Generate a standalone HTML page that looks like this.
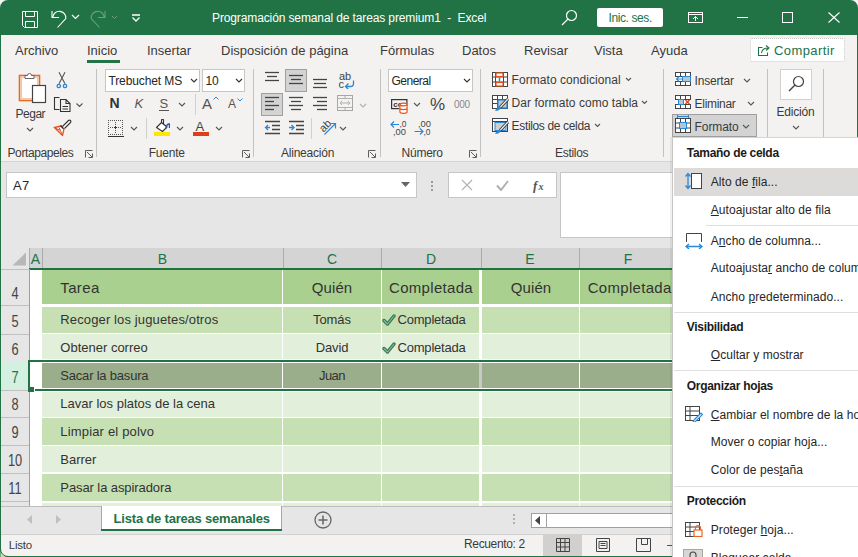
<!DOCTYPE html>
<html><head><meta charset="utf-8"><style>
html,body{margin:0;padding:0;}
body{width:858px;height:557px;position:relative;overflow:hidden;background:#ffffff;font-family:"Liberation Sans", sans-serif;}
.t{position:absolute;white-space:pre;font-family:"Liberation Sans", sans-serif;}
.r{position:absolute;}
</style></head><body>
<div class="r" style="left:0px;top:0px;width:858px;height:35px;background:#217346;"></div>
<div class="t" style="left:212px;top:11.54px;font-size:12px;line-height:12px;color:#ffffff;letter-spacing:-0.12px;">Programación semanal de tareas premium1&nbsp; -&nbsp; Excel</div>
<svg class="r" style="left:22px;top:11px" width="16" height="17" viewBox="0 0 16 17"><path d="M0.5 0.5h15v16h-13l-2-2z M3.5 0.5v5h9v-5 M3.5 16.5v-6h9v6" fill="none" stroke="#fff" stroke-width="1"/></svg>
<svg class="r" style="left:50px;top:10px" width="18" height="18" viewBox="0 0 18 18"><path d="M2 1V7.5H9 M2.8 7.2 A6.4 6.4 0 0 1 15.8 8.5 L7.5 17.5" fill="none" stroke="#fff" stroke-width="1.1"/></svg>
<svg class="r" style="left:71px;top:14px" width="9" height="6" viewBox="0 0 9 6"><path d="M1 1l3.5 3.5L8 1" fill="none" stroke="#fff" stroke-width="1.2"/></svg>
<svg class="r" style="left:89px;top:10px" width="18" height="18" viewBox="0 0 18 18"><path d="M16 1V7.5H9 M15.2 7.2 A6.4 6.4 0 0 0 2.2 8.5 L10.5 17.5" fill="none" stroke="#6d9f83" stroke-width="1.1"/></svg>
<svg class="r" style="left:111px;top:15px" width="7" height="5" viewBox="0 0 7 5"><path d="M1 1l2.5 2.5L6 1" fill="none" stroke="#6d9f83" stroke-width="1"/></svg>
<svg class="r" style="left:131px;top:14px" width="10" height="8" viewBox="0 0 10 8"><path d="M1 1h8 M1.5 3.5l3.5 3.5 3.5-3.5" fill="none" stroke="#fff" stroke-width="1.3"/></svg>
<svg class="r" style="left:561px;top:9px" width="17" height="17" viewBox="0 0 17 17"><circle cx="10.5" cy="6.5" r="5" fill="none" stroke="#fff" stroke-width="1.2"/><path d="M7 10L1 16" stroke="#fff" stroke-width="1.3"/></svg>
<div class="r" style="left:597px;top:8px;width:66px;height:19px;background:#ffffff;border-radius:2px;"></div>
<div class="t" style="left:608.5px;top:11.64px;font-size:12px;line-height:12px;color:#217346;letter-spacing:-0.4px;">Inic. ses.</div>
<svg class="r" style="left:688px;top:12px" width="15" height="11" viewBox="0 0 15 11"><rect x="0.5" y="0.5" width="14" height="10" fill="none" stroke="#fff"/><path d="M0.5 2.5h14 M7.5 9V4.5 M5 7l2.5-2.5L10 7" fill="none" stroke="#fff"/></svg>
<div class="r" style="left:737px;top:17px;width:11px;height:1px;background:#ffffff;"></div>
<svg class="r" style="left:782px;top:12px" width="12" height="11" viewBox="0 0 12 11"><rect x="0.5" y="0.5" width="10" height="10" fill="none" stroke="#fff"/></svg>
<svg class="r" style="left:828px;top:12px" width="12" height="11" viewBox="0 0 12 11"><path d="M0.5 0.5l11 10 M11.5 0.5l-11 10" stroke="#fff" stroke-width="1.1"/></svg>
<div class="r" style="left:0px;top:35px;width:858px;height:126px;background:#f3f2f1;"></div>
<div class="t" style="left:15px;top:44.30px;font-size:13px;line-height:13px;color:#3b3a39;">Archivo</div>
<div class="t" style="left:87px;top:44.30px;font-size:13px;line-height:13px;color:#3b3a39;">Inicio</div>
<div class="t" style="left:147px;top:44.30px;font-size:13px;line-height:13px;color:#3b3a39;">Insertar</div>
<div class="t" style="left:221px;top:44.30px;font-size:13px;line-height:13px;color:#3b3a39;">Disposición de página</div>
<div class="t" style="left:380px;top:44.30px;font-size:13px;line-height:13px;color:#3b3a39;">Fórmulas</div>
<div class="t" style="left:462px;top:44.30px;font-size:13px;line-height:13px;color:#3b3a39;">Datos</div>
<div class="t" style="left:524px;top:44.30px;font-size:13px;line-height:13px;color:#3b3a39;">Revisar</div>
<div class="t" style="left:594px;top:44.30px;font-size:13px;line-height:13px;color:#3b3a39;">Vista</div>
<div class="t" style="left:651px;top:44.30px;font-size:13px;line-height:13px;color:#3b3a39;">Ayuda</div>
<div class="r" style="left:87px;top:60px;width:33px;height:3px;background:#217346;"></div>
<div class="r" style="left:750px;top:38px;width:95px;height:24px;background:#ffffff;border:1px dotted #c8c6c4;box-sizing:border-box;border-radius:2px;"></div>
<svg class="r" style="left:757px;top:43px" width="14" height="14" viewBox="0 0 14 14"><path d="M5.5 4.5h-4v8h9v-3" fill="none" stroke="#217346" stroke-width="1.1"/><path d="M4.5 10 C5 6 8 5 11 5 M9 2.5l3 2.5-3 2.5" fill="none" stroke="#217346" stroke-width="1.1"/></svg>
<div class="t" style="left:774px;top:44.30px;font-size:13px;line-height:13px;color:#217346;letter-spacing:0.4px;">Compartir</div>
<div class="r" style="left:0px;top:161px;width:858px;height:1px;background:#d6d4d2;"></div>
<div class="r" style="left:96px;top:69px;width:1px;height:88px;background:#c4c2c0;"></div>
<div class="r" style="left:253px;top:69px;width:1px;height:88px;background:#c4c2c0;"></div>
<div class="r" style="left:380px;top:69px;width:1px;height:88px;background:#c4c2c0;"></div>
<div class="r" style="left:480px;top:69px;width:1px;height:88px;background:#c4c2c0;"></div>
<div class="r" style="left:663px;top:69px;width:1px;height:88px;background:#c4c2c0;"></div>
<div class="r" style="left:767px;top:69px;width:1px;height:88px;background:#c4c2c0;"></div>
<div class="r" style="left:823px;top:69px;width:1px;height:88px;background:#c4c2c0;"></div>
<div class="t" style="left:7.5px;top:146.54px;font-size:12px;line-height:12px;color:#3b3a39;letter-spacing:-0.4px;">Portapapeles</div>
<div class="t" style="left:148.7px;top:146.54px;font-size:12px;line-height:12px;color:#3b3a39;letter-spacing:-0.2px;">Fuente</div>
<div class="t" style="left:280.9px;top:146.54px;font-size:12px;line-height:12px;color:#3b3a39;letter-spacing:-0.2px;">Alineación</div>
<div class="t" style="left:401.6px;top:146.54px;font-size:12px;line-height:12px;color:#3b3a39;letter-spacing:-0.25px;">Número</div>
<div class="t" style="left:555px;top:146.54px;font-size:12px;line-height:12px;color:#3b3a39;letter-spacing:-0.3px;">Estilos</div>
<svg class="r" style="left:85px;top:150px" width="8" height="8" viewBox="0 0 8 8"><path d="M0.5 7.5V0.5h7 M2 2l5 5 M7.5 3.5v4h-4" fill="none" stroke="#605e5c" stroke-width="1"/></svg>
<svg class="r" style="left:242px;top:150px" width="8" height="8" viewBox="0 0 8 8"><path d="M0.5 7.5V0.5h7 M2 2l5 5 M7.5 3.5v4h-4" fill="none" stroke="#605e5c" stroke-width="1"/></svg>
<svg class="r" style="left:368px;top:150px" width="8" height="8" viewBox="0 0 8 8"><path d="M0.5 7.5V0.5h7 M2 2l5 5 M7.5 3.5v4h-4" fill="none" stroke="#605e5c" stroke-width="1"/></svg>
<svg class="r" style="left:469px;top:150px" width="8" height="8" viewBox="0 0 8 8"><path d="M0.5 7.5V0.5h7 M2 2l5 5 M7.5 3.5v4h-4" fill="none" stroke="#605e5c" stroke-width="1"/></svg>
<svg class="r" style="left:18px;top:72px" width="30" height="33" viewBox="0 0 30 33"><rect x="1.5" y="3.5" width="20" height="25" fill="#fdf1e3" stroke="#e46a26" stroke-width="1.6"/><rect x="3.5" y="5.5" width="16" height="21" fill="#fff" stroke="#f0c9a4" stroke-width="1"/><path d="M7 6.5V3.5h2.5a2 2 0 0 1 4 0H16v3z" fill="#fff" stroke="#666" stroke-width="1"/><rect x="14.5" y="13.5" width="13" height="17" fill="#fff" stroke="#444" stroke-width="1.2"/></svg>
<div class="t" style="left:15.6px;top:107.84px;font-size:12px;line-height:12px;color:#3b3a39;letter-spacing:-0.5px;">Pegar</div>
<svg class="r" style="left:26px;top:127px" width="8" height="5" viewBox="0 0 8 5"><path d="M1 1l3 3 3-3" fill="none" stroke="#555" stroke-width="1.1"/></svg>
<svg class="r" style="left:56px;top:71px" width="12" height="18" viewBox="0 0 12 18"><path d="M3 1.2l6 11.5 M9 1.2L3 12.7" stroke="#555" stroke-width="1.1"/><circle cx="2.8" cy="15" r="1.7" fill="none" stroke="#2b88d8" stroke-width="1.3"/><circle cx="9" cy="15" r="1.7" fill="none" stroke="#2b88d8" stroke-width="1.3"/></svg>
<svg class="r" style="left:53px;top:96px" width="18" height="17" viewBox="0 0 18 17"><path d="M6.5 1.5H1.5V13.5H6.5" fill="none" stroke="#333" stroke-width="1.1"/><path d="M7.5 3.5H13L17 7.5V15.5H7.5Z M13 3.5V7.5H17 M9.5 10.5H15 M9.5 13H15" fill="none" stroke="#333" stroke-width="1.1"/></svg>
<svg class="r" style="left:76px;top:103px" width="7" height="4" viewBox="0 0 7 4"><path d="M0.5 0.5l3 3 3-3" fill="none" stroke="#555" stroke-width="1.1"/></svg>
<svg class="r" style="left:53px;top:119px" width="19" height="17" viewBox="0 0 19 17"><path d="M1.5 8.5L8 7l3 3-1.5 6.5z" fill="#fff" stroke="#e8501a" stroke-width="1.3"/><path d="M3 9.5l4 1.5 2 4 M6 8.5l1.5 3" fill="none" stroke="#e8501a" stroke-width="1"/><path d="M7.5 6.5l3 3" stroke="#333" stroke-width="1.6"/><path d="M9.5 7.5L15.5 1.5a1.3 1.3 0 0 1 2 2L11.5 9.5" fill="#fff" stroke="#333" stroke-width="1.1"/></svg>
<div class="r" style="left:105px;top:69px;width:95px;height:23px;background:#fff;border:1px solid #c8c6c4;box-sizing:border-box;"></div>
<div class="t" style="left:108.4px;top:75.04px;font-size:12px;line-height:12px;color:#262626;letter-spacing:-0.1px;">Trebuchet MS</div>
<svg class="r" style="left:190px;top:78px" width="8" height="5" viewBox="0 0 8 5"><path d="M1 1l3 3 3-3" fill="none" stroke="#333" stroke-width="1.1"/></svg>
<div class="r" style="left:202px;top:69px;width:43px;height:23px;background:#fff;border:1px solid #c8c6c4;box-sizing:border-box;"></div>
<div class="t" style="left:205.4px;top:75.04px;font-size:12px;line-height:12px;color:#262626;">10</div>
<svg class="r" style="left:235px;top:78px" width="8" height="5" viewBox="0 0 8 5"><path d="M1 1l3 3 3-3" fill="none" stroke="#333" stroke-width="1.1"/></svg>
<div class="t" style="left:109.5px;top:96.15px;font-size:14px;line-height:14px;color:#333;font-weight:700;">N</div>
<div class="t" style="left:134.5px;top:97.00px;font-size:13px;line-height:13px;color:#555;font-style:italic;">K</div>
<div class="t" style="left:159.5px;top:97.00px;font-size:13px;line-height:13px;color:#555;">S</div>
<div class="r" style="left:159px;top:110px;width:10px;height:1px;background:#555;"></div>
<svg class="r" style="left:178px;top:102px" width="8" height="5" viewBox="0 0 8 5"><path d="M1 1l3 3 3-3" fill="none" stroke="#555" stroke-width="1.1"/></svg>
<div class="r" style="left:195px;top:94px;width:1px;height:21px;background:#d2d0ce;"></div>
<div class="t" style="left:202px;top:95.80px;font-size:15px;line-height:15px;color:#555;">A</div>
<svg class="r" style="left:213px;top:96px" width="6" height="4" viewBox="0 0 6 4"><path d="M0.5 3.5L3 1l2.5 2.5" fill="none" stroke="#2b88d8" stroke-width="1"/></svg>
<div class="t" style="left:228px;top:98.34px;font-size:12px;line-height:12px;color:#555;">A</div>
<svg class="r" style="left:237px;top:98px" width="6" height="4" viewBox="0 0 6 4"><path d="M0.5 0.5L3 3l2.5-2.5" fill="none" stroke="#2b88d8" stroke-width="1"/></svg>
<svg class="r" style="left:108px;top:120px" width="16" height="17" viewBox="0 0 16 17"><path d="M0 0h1v1h-1z M0 14h1v1h-1z M0 0h1v1h-1z M14 0h1v1h-1z M2 0h1v1h-1z M2 14h1v1h-1z M0 2h1v1h-1z M14 2h1v1h-1z M4 0h1v1h-1z M4 14h1v1h-1z M0 4h1v1h-1z M14 4h1v1h-1z M6 0h1v1h-1z M6 14h1v1h-1z M0 6h1v1h-1z M14 6h1v1h-1z M8 0h1v1h-1z M8 14h1v1h-1z M0 8h1v1h-1z M14 8h1v1h-1z M10 0h1v1h-1z M10 14h1v1h-1z M0 10h1v1h-1z M14 10h1v1h-1z M12 0h1v1h-1z M12 14h1v1h-1z M0 12h1v1h-1z M14 12h1v1h-1z M14 0h1v1h-1z M14 14h1v1h-1z M0 14h1v1h-1z M14 14h1v1h-1z M7 2h1v1h-1z M2 7h1v1h-1z M7 4h1v1h-1z M4 7h1v1h-1z M7 6h1v1h-1z M6 7h1v1h-1z M7 8h1v1h-1z M8 7h1v1h-1z M7 10h1v1h-1z M10 7h1v1h-1z M7 12h1v1h-1z M12 7h1v1h-1z" fill="#555"/><path d="M0 16.5h16" stroke="#333" stroke-width="1"/><path d="M6 7.5h3 M7.5 6v3" stroke="#333" stroke-width="1"/></svg>
<svg class="r" style="left:130px;top:126px" width="8" height="5" viewBox="0 0 8 5"><path d="M1 1l3 3 3-3" fill="none" stroke="#555" stroke-width="1.1"/></svg>
<div class="r" style="left:146px;top:118px;width:1px;height:21px;background:#d2d0ce;"></div>
<svg class="r" style="left:155px;top:119px" width="15" height="14" viewBox="0 0 15 14"><path d="M1.5 8.5L6.5 3.5L12 8L7.5 12.5Z" fill="#fff" stroke="#333" stroke-width="1.1" stroke-linejoin="round"/><path d="M6.5 3.5V1.2a1 1 0 0 1 2 0V5.5" fill="none" stroke="#333" stroke-width="1.1"/><path d="M11 9.5c0.5-3 1.5-5 3.5-4.5V9" fill="none" stroke="#2b579a" stroke-width="1.4"/></svg>
<div class="r" style="left:154px;top:132px;width:16px;height:4px;background:#ffe600;"></div>
<svg class="r" style="left:176px;top:126px" width="8" height="5" viewBox="0 0 8 5"><path d="M1 1l3 3 3-3" fill="none" stroke="#555" stroke-width="1.1"/></svg>
<div class="t" style="left:195.5px;top:119.50px;font-size:13px;line-height:13px;color:#444;">A</div>
<div class="r" style="left:193px;top:132px;width:16px;height:4px;background:#e03e1a;"></div>
<svg class="r" style="left:215px;top:126px" width="8" height="5" viewBox="0 0 8 5"><path d="M1 1l3 3 3-3" fill="none" stroke="#555" stroke-width="1.1"/></svg>
<div class="r" style="left:285px;top:69px;width:22px;height:23px;background:#d3d3d3;border:1px solid #9f9f9f;box-sizing:border-box;"></div>
<div class="r" style="left:261px;top:93px;width:22px;height:23px;background:#d3d3d3;border:1px solid #9f9f9f;box-sizing:border-box;"></div>
<svg class="r" style="left:264px;top:69px" width="18" height="18" viewBox="0 0 18 18"><path d="M1 3.5H15" stroke="#444" stroke-width="1.3"/><path d="M3 7.5H13" stroke="#444" stroke-width="1.3"/><path d="M1 11.5H15" stroke="#444" stroke-width="1.3"/></svg>
<svg class="r" style="left:287px;top:71px" width="18" height="18" viewBox="0 0 18 18"><path d="M2 4.5H16" stroke="#444" stroke-width="1.3"/><path d="M4 8.5H14" stroke="#444" stroke-width="1.3"/><path d="M2 12.5H16" stroke="#444" stroke-width="1.3"/></svg>
<svg class="r" style="left:311px;top:75px" width="18" height="18" viewBox="0 0 18 18"><path d="M2 4.5H16" stroke="#444" stroke-width="1.3"/><path d="M3 8.5H15" stroke="#444" stroke-width="1.3"/><path d="M2 12.5H16" stroke="#444" stroke-width="1.3"/></svg>
<div class="t" style="left:339px;top:71.19px;font-size:11px;line-height:11px;color:#444;">ab</div>
<div class="t" style="left:338.5px;top:79.49px;font-size:11px;line-height:11px;color:#444;">c</div>
<svg class="r" style="left:344px;top:80px" width="11" height="9" viewBox="0 0 11 9"><path d="M9.5 0.5v3a3 3 0 0 1-3 3H2 M4.5 3.5l-3 3 3 3" fill="none" stroke="#2b88d8" stroke-width="1.3"/></svg>
<svg class="r" style="left:263px;top:95px" width="18" height="18" viewBox="0 0 18 18"><path d="M2 2.5H16" stroke="#444" stroke-width="1.3"/><path d="M2 6.5H11" stroke="#444" stroke-width="1.3"/><path d="M2 10.5H16" stroke="#444" stroke-width="1.3"/><path d="M2 14.5H11" stroke="#444" stroke-width="1.3"/></svg>
<svg class="r" style="left:287px;top:95px" width="18" height="18" viewBox="0 0 18 18"><path d="M2 2.5H16" stroke="#444" stroke-width="1.3"/><path d="M4 6.5H14" stroke="#444" stroke-width="1.3"/><path d="M2 10.5H16" stroke="#444" stroke-width="1.3"/><path d="M4 14.5H14" stroke="#444" stroke-width="1.3"/></svg>
<svg class="r" style="left:311px;top:95px" width="18" height="18" viewBox="0 0 18 18"><path d="M2 2.5H16" stroke="#444" stroke-width="1.3"/><path d="M6 6.5H16" stroke="#444" stroke-width="1.3"/><path d="M2 10.5H16" stroke="#444" stroke-width="1.3"/><path d="M6 14.5H16" stroke="#444" stroke-width="1.3"/></svg>
<svg class="r" style="left:337px;top:95px" width="16" height="17" viewBox="0 0 16 17"><rect x="0.5" y="0.5" width="15" height="15" fill="none" stroke="#a8a6a4"/><path d="M0.5 3.5h15 M0.5 12.5h15 M8 0.5v3 M8 12.5v3 M3 8h10 M5 6l-2 2 2 2 M11 6l2 2-2 2" fill="none" stroke="#b3b0ad" stroke-width="1"/></svg>
<svg class="r" style="left:359px;top:103px" width="8" height="5" viewBox="0 0 8 5"><path d="M1 1l3 3 3-3" fill="none" stroke="#b3b0ad" stroke-width="1.1"/></svg>
<svg class="r" style="left:264px;top:119px" width="17" height="17" viewBox="0 0 17 17"><path d="M1 2.5h15 M8 6.5h8 M8 10.5h8 M1 14.5h15" stroke="#444" stroke-width="1.3"/><path d="M6 8.5H1.5 M4 6l-2.5 2.5L4 11" fill="none" stroke="#2b88d8" stroke-width="1.3"/></svg>
<svg class="r" style="left:288px;top:119px" width="17" height="17" viewBox="0 0 17 17"><path d="M1 2.5h15 M8 6.5h8 M8 10.5h8 M1 14.5h15" stroke="#444" stroke-width="1.3"/><path d="M1 8.5h5 M3.5 6L6 8.5 3.5 11" fill="none" stroke="#2b88d8" stroke-width="1.3"/></svg>
<div class="r" style="left:311px;top:118px;width:1px;height:21px;background:#d2d0ce;"></div>
<div class="t" style="left:319.5px;top:120.19px;font-size:11px;line-height:11px;color:#444;transform:rotate(-45deg);transform-origin:50% 60%;">ab</div>
<svg class="r" style="left:322px;top:118px" width="16" height="18" viewBox="0 0 16 18"><path d="M2.5 16.5L13 6 M8.5 5.5h5v5" fill="none" stroke="#2b88d8" stroke-width="1.2"/></svg>
<svg class="r" style="left:339px;top:126px" width="8" height="5" viewBox="0 0 8 5"><path d="M1 1l3 3 3-3" fill="none" stroke="#555" stroke-width="1.1"/></svg>
<div class="r" style="left:388px;top:69px;width:85px;height:23px;background:#fff;border:1px solid #c8c6c4;box-sizing:border-box;"></div>
<div class="t" style="left:391.5px;top:75.04px;font-size:12px;line-height:12px;color:#262626;letter-spacing:-0.5px;">General</div>
<svg class="r" style="left:463px;top:78px" width="8" height="5" viewBox="0 0 8 5"><path d="M1 1l3 3 3-3" fill="none" stroke="#333" stroke-width="1.1"/></svg>
<svg class="r" style="left:391px;top:99px" width="18" height="15" viewBox="0 0 18 15"><rect x="0.6" y="0.6" width="15.3" height="9" fill="none" stroke="#333" stroke-width="1.2"/><text x="2.3" y="7.6" font-size="8" font-family="Liberation Sans" font-weight="bold" fill="#333" textLength="9" lengthAdjust="spacingAndGlyphs">cc</text><path d="M8.5 5.5h8.5v8a4.25 1.3 0 0 1-8.5 0z" fill="#fff"/><ellipse cx="12.5" cy="5.5" rx="3.6" ry="1.4" fill="#fff" stroke="#e8501a" stroke-width="1.2"/><path d="M8.9 5.5v7.5a3.6 1.4 0 0 0 7.2 0V5.5 M8.9 9.3a3.6 1.4 0 0 0 7.2 0" fill="none" stroke="#e8501a" stroke-width="1.2"/></svg>
<svg class="r" style="left:413px;top:102px" width="8" height="5" viewBox="0 0 8 5"><path d="M1 1l3 3 3-3" fill="none" stroke="#555" stroke-width="1.1"/></svg>
<div class="t" style="left:430px;top:96.11px;font-size:17px;line-height:17px;color:#444;">%</div>
<div class="t" style="left:454px;top:100.03px;font-size:10px;line-height:10px;color:#888;letter-spacing:-0.3px;">000</div>
<svg class="r" style="left:389px;top:119px" width="19" height="18" viewBox="0 0 19 18"><path d="M10 5.5H2 M5 2.5L2 5.5 5 8.5" fill="none" stroke="#2b88d8" stroke-width="1.2"/><text x="10.5" y="8.3" font-size="9.5" font-family="Liberation Sans" fill="#444" textLength="7" lengthAdjust="spacingAndGlyphs">,0</text><text x="4" y="16.3" font-size="9.5" font-family="Liberation Sans" fill="#444" textLength="13" lengthAdjust="spacingAndGlyphs">,00</text></svg>
<svg class="r" style="left:413px;top:119px" width="19" height="18" viewBox="0 0 19 18"><text x="5" y="8.3" font-size="9.5" font-family="Liberation Sans" fill="#444" textLength="13" lengthAdjust="spacingAndGlyphs">,00</text><path d="M1.5 12.5H10 M7 9.5L10 12.5 7 15.5" fill="none" stroke="#2b88d8" stroke-width="1.2"/><text x="10.5" y="16.3" font-size="9.5" font-family="Liberation Sans" fill="#444" textLength="7" lengthAdjust="spacingAndGlyphs">,0</text></svg>
<svg class="r" style="left:491px;top:71px" width="17" height="16" viewBox="0 0 17 16"><rect x="1.5" y="1.5" width="15" height="14" fill="#fff" stroke="#444"/><path d="M1.5 6h15 M1.5 11h15 M4.5 1.5v14 M12.5 1.5v14" stroke="#444"/><rect x="5" y="2" width="7" height="3.5" fill="#fff" stroke="#e8501a" stroke-width="1.2"/><rect x="5" y="11.5" width="7" height="3.5" fill="#fff" stroke="#e8501a" stroke-width="1.2"/><path d="M8.5 6.5v4" stroke="#2b88d8" stroke-width="1.5"/></svg>
<div class="t" style="left:511.6px;top:73.64px;font-size:12px;line-height:12px;color:#3b3a39;letter-spacing:0.05px;">Formato condicional</div>
<svg class="r" style="left:625px;top:77px" width="7" height="5" viewBox="0 0 7 5"><path d="M1 1l2.5 2.5L6 1" fill="none" stroke="#555" stroke-width="1.1"/></svg>
<svg class="r" style="left:491px;top:94px" width="19" height="18" viewBox="0 0 19 18"><rect x="1.5" y="1.5" width="15" height="13" fill="#fff" stroke="#444"/><path d="M1.5 5.5h15 M1.5 9.5h15 M6.5 1.5v13 M11.5 1.5v13" stroke="#444"/><rect x="7" y="6" width="9" height="8" fill="#c5c5c5" stroke="#2b88d8" stroke-width="1.2"/><path d="M9 13.5L17 5" stroke="#333" stroke-width="3"/><path d="M9 13.5L17 5" stroke="#f3f2f1" stroke-width="1.2"/><path d="M4 17c1-2 2.5-4 5-4.5l1 1c-1 2.5-3 3.5-6 3.5z" fill="#2b88d8"/></svg>
<div class="t" style="left:511.6px;top:96.64px;font-size:12px;line-height:12px;color:#3b3a39;letter-spacing:0.05px;">Dar formato como tabla</div>
<svg class="r" style="left:641px;top:100px" width="7" height="5" viewBox="0 0 7 5"><path d="M1 1l2.5 2.5L6 1" fill="none" stroke="#555" stroke-width="1.1"/></svg>
<svg class="r" style="left:491px;top:117px" width="19" height="18" viewBox="0 0 19 18"><rect x="1.5" y="1.5" width="15" height="13" fill="#fff" stroke="#444"/><path d="M1.5 4.5h15" stroke="#444"/><rect x="4" y="5.5" width="11" height="8" fill="#cfcfcf" stroke="#2b88d8" stroke-width="1"/><path d="M9 13.5L17 5" stroke="#333" stroke-width="3"/><path d="M9 13.5L17 5" stroke="#f3f2f1" stroke-width="1.2"/><path d="M4 17c1-2 2.5-4 5-4.5l1 1c-1 2.5-3 3.5-6 3.5z" fill="#2b88d8"/></svg>
<div class="t" style="left:511.6px;top:119.64px;font-size:12px;line-height:12px;color:#3b3a39;letter-spacing:-0.35px;">Estilos de celda</div>
<svg class="r" style="left:594px;top:123px" width="7" height="5" viewBox="0 0 7 5"><path d="M1 1l2.5 2.5L6 1" fill="none" stroke="#555" stroke-width="1.1"/></svg>
<div class="r" style="left:672px;top:114px;width:85px;height:23px;background:#d3d3d3;border:1px solid #9f9f9f;box-sizing:border-box;"></div>
<svg class="r" style="left:675px;top:72px" width="17" height="15" viewBox="0 0 17 15"><rect x="0.5" y="0.5" width="15" height="13" fill="#fff" stroke="#444"/><path d="M0.5 4.5h15 M0.5 9.5h15 M5.5 0.5v13 M10.5 0.5v13" stroke="#444"/><rect x="0" y="5" width="7" height="4" fill="#fff"/><rect x="7.5" y="4.5" width="8" height="5" fill="#b9c3cc" stroke="#2b88d8"/><path d="M7.5 7H1.5 M4 4.5L1.5 7 4 9.5" fill="none" stroke="#2b88d8" stroke-width="1.2"/></svg>
<div class="t" style="left:694.6px;top:74.64px;font-size:12px;line-height:12px;color:#3b3a39;letter-spacing:-0.2px;">Insertar</div>
<svg class="r" style="left:743px;top:78px" width="8" height="5" viewBox="0 0 8 5"><path d="M1 1l3 3 3-3" fill="none" stroke="#555" stroke-width="1.1"/></svg>
<svg class="r" style="left:675px;top:95px" width="17" height="15" viewBox="0 0 17 15"><rect x="0.5" y="0.5" width="15" height="13" fill="#fff" stroke="#444"/><path d="M0.5 4.5h15 M0.5 9.5h15 M5.5 0.5v4 M10.5 0.5v4 M5.5 9.5v4 M10.5 9.5v4" stroke="#444"/><rect x="0" y="5" width="16" height="4" fill="#fff"/><rect x="3.5" y="4.5" width="5" height="5" fill="#b9c3cc" stroke="#2b88d8"/><path d="M10.5 5l4 4 M14.5 5l-4 4" stroke="#e03e1a" stroke-width="1.3"/></svg>
<div class="t" style="left:694.6px;top:97.64px;font-size:12px;line-height:12px;color:#3b3a39;letter-spacing:-0.3px;">Eliminar</div>
<svg class="r" style="left:747px;top:101px" width="8" height="5" viewBox="0 0 8 5"><path d="M1 1l3 3 3-3" fill="none" stroke="#555" stroke-width="1.1"/></svg>
<svg class="r" style="left:675px;top:115px" width="17" height="18" viewBox="0 0 17 18"><rect x="0.5" y="3.5" width="15" height="14" fill="#fff" stroke="#444"/><path d="M0.5 8h15 M0.5 13h15 M5.5 3.5v14 M10.5 3.5v14" stroke="#444"/><rect x="4.5" y="7.5" width="7" height="6" fill="#b9c3cc" stroke="#2b88d8"/><path d="M2.5 1.5h11 M2.5 0v3 M13.5 0v3" stroke="#2b88d8" stroke-width="1.1"/></svg>
<div class="t" style="left:694.6px;top:120.64px;font-size:12px;line-height:12px;color:#3b3a39;letter-spacing:-0.1px;">Formato</div>
<svg class="r" style="left:742px;top:124px" width="8" height="5" viewBox="0 0 8 5"><path d="M1 1l3 3 3-3" fill="none" stroke="#555" stroke-width="1.1"/></svg>
<div class="r" style="left:780px;top:69px;width:32px;height:31px;background:#fff;border:1px solid #d2d0ce;box-sizing:border-box;"></div>
<svg class="r" style="left:788px;top:75px" width="17" height="17" viewBox="0 0 17 17"><circle cx="10.5" cy="6.5" r="5" fill="none" stroke="#444" stroke-width="1.2"/><path d="M7 10L1 16" stroke="#444" stroke-width="1.4"/></svg>
<div class="t" style="left:776.5px;top:105.84px;font-size:12px;line-height:12px;color:#3b3a39;letter-spacing:-0.2px;">Edición</div>
<svg class="r" style="left:792px;top:125px" width="8" height="5" viewBox="0 0 8 5"><path d="M1 1l3 3 3-3" fill="none" stroke="#555" stroke-width="1.1"/></svg>
<div class="r" style="left:0px;top:162px;width:858px;height:86px;background:#e6e6e6;"></div>
<div class="r" style="left:6px;top:172px;width:411px;height:26px;background:#fff;border:1px solid #c6c6c6;box-sizing:border-box;"></div>
<div class="t" style="left:13px;top:178.80px;font-size:13px;line-height:13px;color:#262626;letter-spacing:0.3px;">A7</div>
<svg class="r" style="left:401px;top:182px" width="9" height="5" viewBox="0 0 9 5"><path d="M0 0h9L4.5 5z" fill="#666"/></svg>
<div class="r" style="left:431px;top:181px;width:2px;height:2px;background:#9a9a9a;"></div>
<div class="r" style="left:431px;top:185px;width:2px;height:2px;background:#9a9a9a;"></div>
<div class="r" style="left:431px;top:189px;width:2px;height:2px;background:#9a9a9a;"></div>
<div class="r" style="left:448px;top:172px;width:109px;height:26px;background:#fff;border:1px solid #c6c6c6;box-sizing:border-box;"></div>
<svg class="r" style="left:461px;top:179px" width="12" height="12" viewBox="0 0 12 12"><path d="M1 1l10 10 M11 1L1 11" stroke="#b3b3b3" stroke-width="1.1"/></svg>
<svg class="r" style="left:496px;top:180px" width="13" height="11" viewBox="0 0 13 11"><path d="M1 5.5l4 4.5 7-9" fill="none" stroke="#b0b0b0" stroke-width="2"/></svg>
<div class="t" style="left:533px;top:178.50px;font-size:13px;line-height:13px;color:#555;font-weight:700;font-family:Liberation Serif;font-style:italic;">f</div>
<div class="t" style="left:538.5px;top:182.03px;font-size:10px;line-height:10px;color:#555;font-weight:700;font-family:Liberation Serif;font-style:italic;">x</div>
<div class="r" style="left:560px;top:172px;width:120px;height:66px;background:#fff;border:1px solid #c6c6c6;box-sizing:border-box;"></div>
<div class="r" style="left:0px;top:248px;width:672px;height:21px;background:#d4d4d4;"></div>
<div class="r" style="left:0px;top:248px;width:29px;height:21px;background:#e6e6e6;"></div>
<svg class="r" style="left:6px;top:251px" width="22" height="16" viewBox="0 0 22 16"><path d="M20 1.5V14.5H6.5z" fill="#b8b8b8"/></svg>
<div class="r" style="left:29px;top:248px;width:1px;height:20px;background:#ababab;"></div>
<div class="r" style="left:42px;top:248px;width:1px;height:20px;background:#ababab;"></div>
<div class="r" style="left:283px;top:248px;width:1px;height:20px;background:#ababab;"></div>
<div class="r" style="left:381px;top:248px;width:1px;height:20px;background:#ababab;"></div>
<div class="r" style="left:481px;top:248px;width:1px;height:20px;background:#ababab;"></div>
<div class="r" style="left:579px;top:248px;width:1px;height:20px;background:#ababab;"></div>
<div class="r" style="left:29px;top:268px;width:643px;height:2px;background:#217346;"></div>
<div class="t" style="left:-14.5px;top:251.95px;font-size:14px;line-height:14px;color:#217346;width:100px;text-align:center;">A</div>
<div class="t" style="left:112.5px;top:251.95px;font-size:14px;line-height:14px;color:#217346;width:100px;text-align:center;">B</div>
<div class="t" style="left:282px;top:251.95px;font-size:14px;line-height:14px;color:#217346;width:100px;text-align:center;">C</div>
<div class="t" style="left:381px;top:251.95px;font-size:14px;line-height:14px;color:#217346;width:100px;text-align:center;">D</div>
<div class="t" style="left:480px;top:251.95px;font-size:14px;line-height:14px;color:#217346;width:100px;text-align:center;">E</div>
<div class="t" style="left:578px;top:251.95px;font-size:14px;line-height:14px;color:#217346;width:100px;text-align:center;">F</div>
<div class="r" style="left:0px;top:269px;width:29px;height:237px;background:#e6e6e6;"></div>
<div class="r" style="left:28.5px;top:269px;width:1.5px;height:237px;background:#a0a0a0;"></div>
<div class="r" style="left:0px;top:269px;width:29px;height:1px;background:#c0c0c0;"></div>
<div class="r" style="left:0px;top:305px;width:29px;height:1px;background:#c0c0c0;"></div>
<div class="t" style="left:-35.5px;top:285.66px;font-size:16px;line-height:16px;color:#444;width:100px;text-align:center;transform:scaleX(0.8);">4</div>
<div class="r" style="left:0px;top:334px;width:29px;height:1px;background:#c0c0c0;"></div>
<div class="t" style="left:-35.5px;top:314.16px;font-size:16px;line-height:16px;color:#444;width:100px;text-align:center;transform:scaleX(0.8);">5</div>
<div class="r" style="left:0px;top:362px;width:29px;height:1px;background:#c0c0c0;"></div>
<div class="t" style="left:-35.5px;top:342.16px;font-size:16px;line-height:16px;color:#444;width:100px;text-align:center;transform:scaleX(0.8);">6</div>
<div class="r" style="left:0px;top:362px;width:28.5px;height:27px;background:#d3f0e0;"></div>
<div class="r" style="left:0px;top:390px;width:29px;height:1px;background:#c0c0c0;"></div>
<div class="t" style="left:-35.5px;top:370.16px;font-size:16px;line-height:16px;color:#217346;width:100px;text-align:center;transform:scaleX(0.8);">7</div>
<div class="r" style="left:0px;top:417px;width:29px;height:1px;background:#c0c0c0;"></div>
<div class="t" style="left:-35.5px;top:397.16px;font-size:16px;line-height:16px;color:#444;width:100px;text-align:center;transform:scaleX(0.8);">8</div>
<div class="r" style="left:0px;top:445px;width:29px;height:1px;background:#c0c0c0;"></div>
<div class="t" style="left:-35.5px;top:425.16px;font-size:16px;line-height:16px;color:#444;width:100px;text-align:center;transform:scaleX(0.8);">9</div>
<div class="r" style="left:0px;top:473px;width:29px;height:1px;background:#c0c0c0;"></div>
<div class="t" style="left:-35.5px;top:453.16px;font-size:16px;line-height:16px;color:#444;width:100px;text-align:center;transform:scaleX(0.8);">10</div>
<div class="r" style="left:0px;top:501px;width:29px;height:1px;background:#c0c0c0;"></div>
<div class="t" style="left:-35.5px;top:481.16px;font-size:16px;line-height:16px;color:#444;width:100px;text-align:center;transform:scaleX(0.8);">11</div>
<div class="r" style="left:0px;top:530px;width:29px;height:1px;background:#c0c0c0;"></div>
<div class="t" style="left:-35.5px;top:510.16px;font-size:16px;line-height:16px;color:#444;width:100px;text-align:center;transform:scaleX(0.8);">12</div>
<div class="r" style="left:30px;top:270px;width:642px;height:236px;background:#ffffff;"></div>
<div class="r" style="left:42px;top:270px;width:240px;height:34px;background:#a9d08e;"></div>
<div class="r" style="left:283px;top:270px;width:98px;height:34px;background:#a9d08e;"></div>
<div class="r" style="left:382px;top:270px;width:97px;height:34px;background:#a9d08e;"></div>
<div class="r" style="left:482px;top:270px;width:97px;height:34px;background:#a9d08e;"></div>
<div class="r" style="left:580px;top:270px;width:92px;height:34px;background:#a9d08e;"></div>
<div class="r" style="left:42px;top:307px;width:240px;height:26px;background:#c6e0b4;"></div>
<div class="r" style="left:283px;top:307px;width:98px;height:26px;background:#c6e0b4;"></div>
<div class="r" style="left:382px;top:307px;width:97px;height:26px;background:#c6e0b4;"></div>
<div class="r" style="left:482px;top:307px;width:97px;height:26px;background:#c6e0b4;"></div>
<div class="r" style="left:580px;top:307px;width:92px;height:26px;background:#c6e0b4;"></div>
<div class="r" style="left:42px;top:334px;width:240px;height:25px;background:#e2efda;"></div>
<div class="r" style="left:283px;top:334px;width:98px;height:25px;background:#e2efda;"></div>
<div class="r" style="left:382px;top:334px;width:97px;height:25px;background:#e2efda;"></div>
<div class="r" style="left:482px;top:334px;width:97px;height:25px;background:#e2efda;"></div>
<div class="r" style="left:580px;top:334px;width:92px;height:25px;background:#e2efda;"></div>
<div class="r" style="left:42px;top:363px;width:240px;height:25px;background:#9aae8b;"></div>
<div class="r" style="left:283px;top:363px;width:98px;height:25px;background:#9aae8b;"></div>
<div class="r" style="left:382px;top:363px;width:97px;height:25px;background:#9aae8b;"></div>
<div class="r" style="left:482px;top:363px;width:97px;height:25px;background:#9aae8b;"></div>
<div class="r" style="left:580px;top:363px;width:92px;height:25px;background:#9aae8b;"></div>
<div class="r" style="left:42px;top:392px;width:240px;height:25px;background:#e2efda;"></div>
<div class="r" style="left:283px;top:392px;width:98px;height:25px;background:#e2efda;"></div>
<div class="r" style="left:382px;top:392px;width:97px;height:25px;background:#e2efda;"></div>
<div class="r" style="left:482px;top:392px;width:97px;height:25px;background:#e2efda;"></div>
<div class="r" style="left:580px;top:392px;width:92px;height:25px;background:#e2efda;"></div>
<div class="r" style="left:42px;top:418px;width:240px;height:27px;background:#c6e0b4;"></div>
<div class="r" style="left:283px;top:418px;width:98px;height:27px;background:#c6e0b4;"></div>
<div class="r" style="left:382px;top:418px;width:97px;height:27px;background:#c6e0b4;"></div>
<div class="r" style="left:482px;top:418px;width:97px;height:27px;background:#c6e0b4;"></div>
<div class="r" style="left:580px;top:418px;width:92px;height:27px;background:#c6e0b4;"></div>
<div class="r" style="left:42px;top:446px;width:240px;height:26px;background:#e2efda;"></div>
<div class="r" style="left:283px;top:446px;width:98px;height:26px;background:#e2efda;"></div>
<div class="r" style="left:382px;top:446px;width:97px;height:26px;background:#e2efda;"></div>
<div class="r" style="left:482px;top:446px;width:97px;height:26px;background:#e2efda;"></div>
<div class="r" style="left:580px;top:446px;width:92px;height:26px;background:#e2efda;"></div>
<div class="r" style="left:42px;top:474px;width:240px;height:27px;background:#c6e0b4;"></div>
<div class="r" style="left:283px;top:474px;width:98px;height:27px;background:#c6e0b4;"></div>
<div class="r" style="left:382px;top:474px;width:97px;height:27px;background:#c6e0b4;"></div>
<div class="r" style="left:482px;top:474px;width:97px;height:27px;background:#c6e0b4;"></div>
<div class="r" style="left:580px;top:474px;width:92px;height:27px;background:#c6e0b4;"></div>
<div class="r" style="left:42px;top:503px;width:240px;height:3px;background:#e2efda;"></div>
<div class="r" style="left:283px;top:503px;width:98px;height:3px;background:#e2efda;"></div>
<div class="r" style="left:382px;top:503px;width:97px;height:3px;background:#e2efda;"></div>
<div class="r" style="left:482px;top:503px;width:97px;height:3px;background:#e2efda;"></div>
<div class="r" style="left:580px;top:503px;width:92px;height:3px;background:#e2efda;"></div>
<div class="r" style="left:479px;top:363px;width:3px;height:25px;background:#c8c8c8;"></div>
<div class="r" style="left:28px;top:360px;width:644px;height:2px;background:#217346;"></div>
<div class="r" style="left:35px;top:389px;width:637px;height:2px;background:#217346;"></div>
<div class="r" style="left:28px;top:360px;width:2px;height:31px;background:#217346;"></div>
<div class="r" style="left:28px;top:387px;width:6px;height:5px;background:#217346;"></div>
<div class="t" style="left:60.3px;top:280.20px;font-size:15px;line-height:15px;color:#333;letter-spacing:0.35px;">Tarea</div>
<div class="t" style="left:60.3px;top:313.00px;font-size:13px;line-height:13px;color:#333333;letter-spacing:0.13px;">Recoger los juguetes/otros</div>
<div class="t" style="left:60.3px;top:341.00px;font-size:13px;line-height:13px;color:#333333;">Obtener correo</div>
<div class="t" style="left:60.3px;top:369.00px;font-size:13px;line-height:13px;color:#333333;letter-spacing:-0.2px;">Sacar la basura</div>
<div class="t" style="left:60.3px;top:397.00px;font-size:13px;line-height:13px;color:#333333;">Lavar los platos de la cena</div>
<div class="t" style="left:60.3px;top:425.00px;font-size:13px;line-height:13px;color:#333333;letter-spacing:0.17px;">Limpiar el polvo</div>
<div class="t" style="left:60.3px;top:453.00px;font-size:13px;line-height:13px;color:#333333;">Barrer</div>
<div class="t" style="left:60.3px;top:481.00px;font-size:13px;line-height:13px;color:#333333;letter-spacing:-0.09px;">Pasar la aspiradora</div>
<div class="t" style="left:282px;top:280.20px;font-size:15px;line-height:15px;color:#333;letter-spacing:0.1px;width:100px;text-align:center;">Quién</div>
<div class="t" style="left:381px;top:280.20px;font-size:15px;line-height:15px;color:#333;letter-spacing:0.3px;width:100px;text-align:center;">Completada</div>
<div class="t" style="left:481px;top:280.20px;font-size:15px;line-height:15px;color:#333;letter-spacing:0.1px;width:100px;text-align:center;">Quién</div>
<div class="t" style="left:587.7px;top:280.20px;font-size:15px;line-height:15px;color:#333;letter-spacing:0.3px;">Completada</div>
<div class="t" style="left:282px;top:313.00px;font-size:13px;line-height:13px;color:#333333;letter-spacing:-0.1px;width:100px;text-align:center;">Tomás</div>
<div class="t" style="left:282px;top:341.00px;font-size:13px;line-height:13px;color:#333333;letter-spacing:-0.1px;width:100px;text-align:center;">David</div>
<div class="t" style="left:282px;top:369.00px;font-size:13px;line-height:13px;color:#333333;letter-spacing:-0.6px;width:100px;text-align:center;">Juan</div>
<svg class="r" style="left:382px;top:314px" width="14" height="12" viewBox="0 0 14 12"><path d="M2 6.5l3.5 3.5L12 2" fill="none" stroke="#2f7a4f" stroke-width="3.4" stroke-linecap="round" stroke-linejoin="round"/><path d="M2 6.5l3.5 3.5L12 2" fill="none" stroke="#93b89d" stroke-width="1.1" stroke-linecap="round" stroke-linejoin="round"/></svg>
<div class="t" style="left:397.5px;top:313.00px;font-size:13px;line-height:13px;color:#333333;letter-spacing:-0.2px;">Completada</div>
<svg class="r" style="left:382px;top:342px" width="14" height="12" viewBox="0 0 14 12"><path d="M2 6.5l3.5 3.5L12 2" fill="none" stroke="#2f7a4f" stroke-width="3.4" stroke-linecap="round" stroke-linejoin="round"/><path d="M2 6.5l3.5 3.5L12 2" fill="none" stroke="#93b89d" stroke-width="1.1" stroke-linecap="round" stroke-linejoin="round"/></svg>
<div class="t" style="left:397.5px;top:341.00px;font-size:13px;line-height:13px;color:#333333;letter-spacing:-0.2px;">Completada</div>
<div class="r" style="left:0px;top:506px;width:672px;height:28px;background:#e6e6e6;"></div>
<div class="r" style="left:0px;top:506px;width:672px;height:1px;background:#bdbdbd;"></div>
<div class="r" style="left:0px;top:534px;width:858px;height:1px;background:#d0d0d0;"></div>
<svg class="r" style="left:27px;top:515px" width="6" height="9" viewBox="0 0 6 9"><path d="M5 0v9L0 4.5z" fill="#c0c0c0"/></svg>
<svg class="r" style="left:56px;top:515px" width="6" height="9" viewBox="0 0 6 9"><path d="M0 0v9l5-4.5z" fill="#c0c0c0"/></svg>
<div class="r" style="left:101px;top:506px;width:181px;height:25px;background:#ffffff;border-left:1px solid #a8a8a8;border-right:1px solid #a8a8a8;box-sizing:border-box;"></div>
<div class="r" style="left:101px;top:529px;width:181px;height:2px;background:#217346;"></div>
<div class="t" style="left:113.6px;top:512.00px;font-size:13px;line-height:13px;color:#217346;font-weight:700;letter-spacing:-0.2px;">Lista de tareas semanales</div>
<svg class="r" style="left:314px;top:511px" width="18" height="18" viewBox="0 0 18 18"><circle cx="9" cy="9" r="8" fill="none" stroke="#666" stroke-width="1.3"/><path d="M9 4.5v9 M4.5 9h9" stroke="#666" stroke-width="1.5"/></svg>
<div class="r" style="left:513px;top:514px;width:2px;height:2px;background:#b0b0b0;"></div>
<div class="r" style="left:513px;top:518px;width:2px;height:2px;background:#b0b0b0;"></div>
<div class="r" style="left:513px;top:522px;width:2px;height:2px;background:#b0b0b0;"></div>
<div class="r" style="left:531px;top:513px;width:149px;height:15px;background:#ffffff;border:1px solid #a0a0a0;box-sizing:border-box;"></div>
<div class="r" style="left:546px;top:513px;width:1px;height:15px;background:#a0a0a0;"></div>
<svg class="r" style="left:535px;top:516px" width="6" height="9" viewBox="0 0 6 9"><path d="M5 0v9L0 4.5z" fill="#444"/></svg>
<div class="r" style="left:0px;top:535px;width:858px;height:22px;background:#f3f2f1;"></div>
<div class="t" style="left:8.7px;top:540.27px;font-size:11.5px;line-height:11.5px;color:#3b3a39;letter-spacing:-0.2px;">Listo</div>
<div class="t" style="left:464px;top:538.34px;font-size:12px;line-height:12px;color:#3b3a39;letter-spacing:-0.35px;">Recuento: 2</div>
<div class="r" style="left:543px;top:534px;width:39px;height:23px;background:#d2d0ce;"></div>
<svg class="r" style="left:556px;top:538px" width="14" height="14" viewBox="0 0 14 14"><path d="M0.5 0.5h13v13h-13z M0.5 4.5h13 M0.5 9h13 M4.5 0.5v13 M9 0.5v13" fill="none" stroke="#444" stroke-width="1"/></svg>
<svg class="r" style="left:596px;top:538px" width="14" height="14" viewBox="0 0 14 14"><path d="M0.5 0.5h13v13h-13z" fill="none" stroke="#444"/><path d="M3 3.5h8v7h-8z M4.5 5.5h5 M4.5 7.5h5" fill="none" stroke="#444" stroke-width="1"/></svg>
<svg class="r" style="left:636px;top:538px" width="15" height="14" viewBox="0 0 15 14"><path d="M0.5 0.5h14v13h-14z M5.5 0.5v6h6v-6" fill="none" stroke="#444" stroke-width="1"/></svg>
<div class="r" style="left:667px;top:545px;width:5px;height:1px;background:#555;"></div>
<div class="r" style="left:0px;top:0px;width:1px;height:557px;background:#217346;"></div>
<div class="r" style="left:0px;top:556px;width:858px;height:1px;background:#217346;"></div>
<div class="r" style="left:670px;top:137px;width:2px;height:420px;background:rgba(0,0,0,0.06);"></div>
<div class="r" style="left:672px;top:137px;width:186px;height:420px;background:#ffffff;border-left:1px solid #c8c6c4;border-top:1px solid #d6d4d2;box-sizing:border-box;"></div>
<div class="r" style="left:674px;top:168px;width:184px;height:28px;background:#dddbd9;"></div>
<div class="t" style="left:686.8px;top:147.04px;font-size:12px;line-height:12px;color:#1b1a19;font-weight:700;letter-spacing:-0.3px;">Tamaño de celda</div>
<div class="t" style="left:710.8px;top:175.74px;font-size:12px;line-height:12px;color:#262626;letter-spacing:0.05px;">Alto de <u>f</u>ila...</div>
<div class="t" style="left:710.8px;top:204.04px;font-size:12px;line-height:12px;color:#262626;letter-spacing:0.05px;"><u>A</u>utoajustar alto de fila</div>
<div class="r" style="left:706px;top:225px;width:152px;height:1px;background:#e1dfdd;"></div>
<div class="t" style="left:710.8px;top:234.84px;font-size:12px;line-height:12px;color:#262626;letter-spacing:0.05px;">A<u>n</u>cho de columna...</div>
<div class="t" style="left:710.8px;top:262.44px;font-size:12px;line-height:12px;color:#262626;letter-spacing:0.05px;">Autoajusta<u>r</u> ancho de columna</div>
<div class="t" style="left:710.8px;top:290.64px;font-size:12px;line-height:12px;color:#262626;letter-spacing:0.05px;">Ancho <u>p</u>redeterminado...</div>
<div class="r" style="left:674px;top:312px;width:184px;height:1px;background:#e1dfdd;"></div>
<div class="t" style="left:686.8px;top:321.34px;font-size:12px;line-height:12px;color:#1b1a19;font-weight:700;letter-spacing:-0.3px;">Visibilidad</div>
<div class="t" style="left:710.8px;top:349.44px;font-size:12px;line-height:12px;color:#262626;letter-spacing:0.05px;"><u>O</u>cultar y mostrar</div>
<div class="r" style="left:674px;top:370px;width:184px;height:1px;background:#e1dfdd;"></div>
<div class="t" style="left:686.8px;top:380.24px;font-size:12px;line-height:12px;color:#1b1a19;font-weight:700;letter-spacing:-0.3px;">Organizar hojas</div>
<div class="t" style="left:710.8px;top:409.24px;font-size:12px;line-height:12px;color:#262626;letter-spacing:0.05px;"><u>C</u>ambiar el nombre de la hoja</div>
<div class="t" style="left:710.8px;top:436.24px;font-size:12px;line-height:12px;color:#262626;letter-spacing:0.05px;">Mover o copiar hoja...</div>
<div class="t" style="left:710.8px;top:463.74px;font-size:12px;line-height:12px;color:#262626;letter-spacing:0.05px;">Color de pes<u>t</u>aña</div>
<div class="r" style="left:674px;top:486px;width:184px;height:1px;background:#e1dfdd;"></div>
<div class="t" style="left:686.8px;top:495.44px;font-size:12px;line-height:12px;color:#1b1a19;font-weight:700;letter-spacing:-0.3px;">Protección</div>
<div class="t" style="left:710.8px;top:523.54px;font-size:12px;line-height:12px;color:#262626;letter-spacing:0.05px;">Proteger <u>h</u>oja...</div>
<div class="t" style="left:710.8px;top:551.84px;font-size:12px;line-height:12px;color:#262626;letter-spacing:0.05px;">Bloquear celda</div>
<svg class="r" style="left:685px;top:172px" width="17" height="18" viewBox="0 0 17 18"><rect x="6.5" y="1.5" width="10" height="15" fill="#fff" stroke="#444"/><path d="M3 2v14 M0.5 4.5L3 1.5 5.5 4.5 M0.5 13.5L3 16.5 5.5 13.5" fill="none" stroke="#2b88d8" stroke-width="1.3"/></svg>
<svg class="r" style="left:685px;top:233px" width="18" height="16" viewBox="0 0 18 16"><path d="M1.5 9V0.5h15V9" fill="none" stroke="#444"/><path d="M1 13.5h16 M4 11l-3 2.5L4 16 M14 11l3 2.5-3 2.5" fill="none" stroke="#2b88d8" stroke-width="1.3"/></svg>
<svg class="r" style="left:685px;top:406px" width="18" height="16" viewBox="0 0 18 16"><rect x="0.5" y="0.5" width="14" height="14" fill="#fff" stroke="#444"/><path d="M0.5 5h14 M0.5 9.5h14 M5 0.5v14" stroke="#444"/><path d="M8 15l8-8 1.5 1.5-8 8z" fill="#fff" stroke="#2b88d8" stroke-width="1.2"/></svg>
<svg class="r" style="left:685px;top:522px" width="18" height="15" viewBox="0 0 18 15"><rect x="0.5" y="0.5" width="14" height="14" fill="#fff" stroke="#444"/><path d="M0.5 5h14 M0.5 9.5h14 M5 0.5v14" stroke="#444"/><rect x="9" y="8" width="8" height="6.5" fill="#fff" stroke="#e46a26" stroke-width="1.2"/><path d="M10.5 8V6a2.5 2.5 0 0 1 5 0v2" fill="none" stroke="#e46a26" stroke-width="1.2"/></svg>
<div class="r" style="left:683px;top:549px;width:20px;height:8px;background:#d9d7d5;border:1px solid #a8a6a4;border-bottom:none;box-sizing:border-box;"></div>
<svg class="r" style="left:687px;top:551px" width="12" height="6" viewBox="0 0 12 6"><path d="M3 6V4a3 3 0 0 1 6 0v2" fill="none" stroke="#444" stroke-width="1.1"/></svg>
<div class="r" style="left:857px;top:35px;width:1px;height:102px;background:#217346;"></div>
<svg class="r" style="left:0px;top:0px" width="8" height="8" viewBox="0 0 8 8"><path d="M0 0H8A8 8 0 0 0 0 8z" fill="#f4f4f4"/></svg>
<svg class="r" style="left:850px;top:0px" width="8" height="8" viewBox="0 0 8 8"><path d="M8 0H0A8 8 0 0 1 8 8z" fill="#f4f4f4"/></svg>
<svg class="r" style="left:0px;top:549px" width="8" height="8" viewBox="0 0 8 8"><path d="M0 8H8A7.5 7.5 0 0 1 0.5 0.5V8z" fill="#c6e0b4"/><path d="M0.5 0A7.5 7.5 0 0 0 8 7.5" fill="none" stroke="#217346" stroke-width="1"/></svg>
</body></html>
